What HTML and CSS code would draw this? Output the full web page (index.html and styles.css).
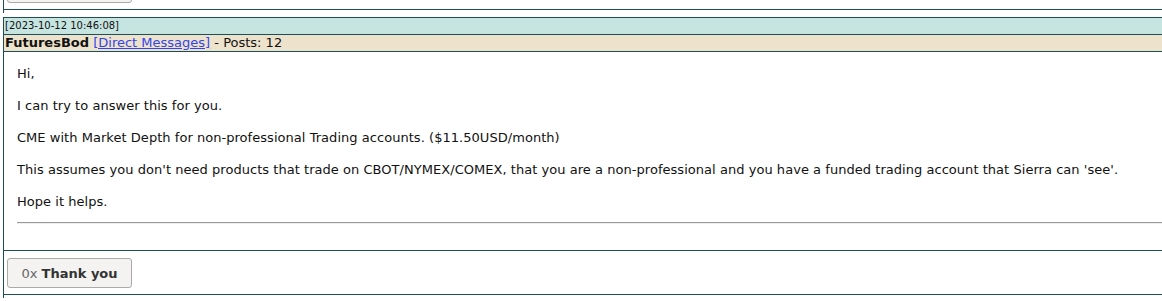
FILE: index.html
```html
<!DOCTYPE html>
<html lang="en">

<head>
    <meta charset="UTF-8">
    <title>Post</title>
    <link rel="stylesheet" href="styles.css">
</head>

<body>
    <div class="post prev">
        <div class="post-foot">
            <button class="thanks">0x <b>Thank you</b></button>
        </div>
    </div>

    <div class="post">
        <div class="post-date">[2023-10-12 10:46:08]</div>
        <div class="post-author">
            <b>FuturesBod</b> <a href="#">[Direct Messages]</a> - Posts: 12
        </div>
        <div class="post-body">
            <p>Hi,</p>
            <p>I can try to answer this for you.</p>
            <p>CME with Market Depth for non-professional Trading accounts. ($11.50USD/month)</p>
            <p>This assumes you don't need products that trade on CBOT/NYMEX/COMEX, that you are a non-professional and you have a funded trading account that Sierra can 'see'.</p>
            <p class="last">Hope it helps.</p>
            <hr>
        </div>
        <div class="post-foot">
            <button class="thanks">0x <b>Thank you</b></button>
        </div>
    </div>
</body>

</html>
```

FILE: styles.css
```css
body {
    margin: 0;
    font-family: "DejaVu Sans", Verdana, sans-serif;
    font-size: 13px;
    color: #111;
    background: #fff;
    overflow: hidden;
}

.post {
    margin-left: 3px;
    border-left: 1px solid #1f4d58;
    padding-bottom: 3px;
    margin-bottom: 4px;
}

.prev {
    margin-top: -35px;
}

.post-date {
    border-top: 1px solid #1f4d58;
    border-bottom: 1px solid #1f4d58;
    background-color: #c6e4e0;
    height: 16px;
    line-height: 16px;
    font-size: 10px;
    padding-left: 1px;
}

.post-author {
    border-bottom: 1px solid #1f4d58;
    background-color: #ede3cc;
    height: 16px;
    line-height: 16px;
    padding-left: 1px;
}

.post-author a {
    color: #3344ee;
}

.post-body {
    padding: 14px 0 26px 13px;
    letter-spacing: 0.04px;
}

.post-body p {
    margin: 0 0 16px 0;
    line-height: 16px;
}

.post-body p.last {
    margin-bottom: 12px;
}

.post-body hr {
    margin: 0;
    border: none;
    border-top: 1px solid #999;
    border-bottom: 1px solid #eee;
}

.post-foot {
    border-top: 1px solid #1f4d58;
    border-bottom: 1px solid #1f4d58;
    padding: 7px 0 6px 3px;
}

.thanks {
    width: 125px;
    height: 30px;
    font-family: "DejaVu Sans", Verdana, sans-serif;
    font-size: 13px;
    color: #666;
    background-color: #f4f3f1;
    border: 1px solid #aaa;
    border-radius: 3px;
    padding: 0;
}

.thanks b {
    color: #333;
}
```
